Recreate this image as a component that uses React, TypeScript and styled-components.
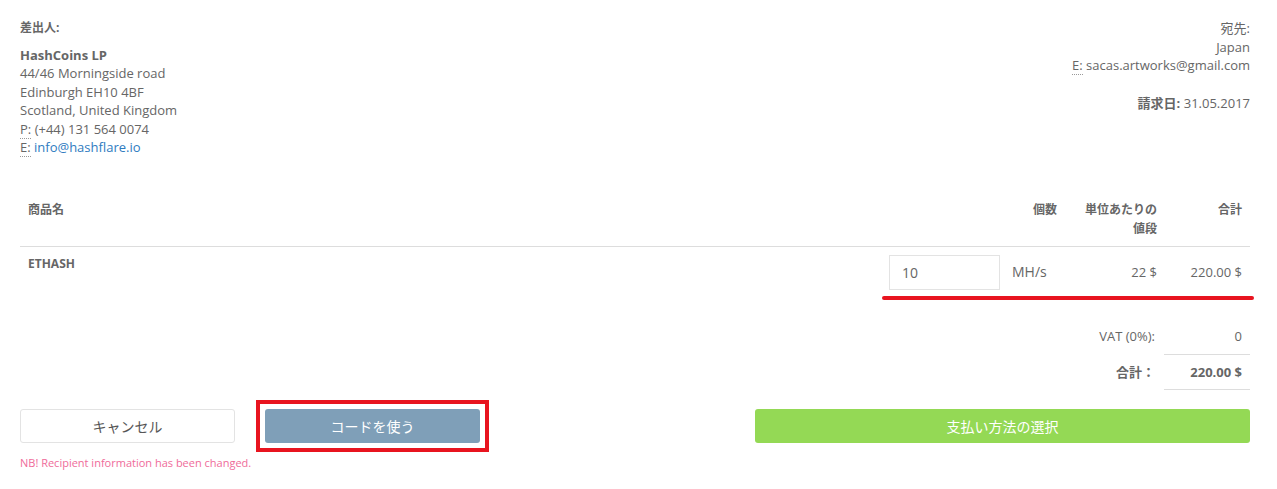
import React from "react";
import styled, { createGlobalStyle } from "styled-components";

const GlobalStyle = createGlobalStyle`
  body {
    margin: 0;
    background: #fff;
    font-family: "Open Sans", "Noto Sans CJK JP", sans-serif;
    font-size: 13px;
    line-height: 18.57px;
    color: #666;
  }
  * { box-sizing: border-box; }
`;

const Page = styled.div`
  padding: 19px 27px 0 20px;
`;

const Parties = styled.div`
  display: flex;
  justify-content: space-between;
  align-items: flex-start;
`;

const Block = styled.div<{ $right?: boolean }>`
  text-align: ${(p) => (p.$right ? "right" : "left")};
`;

const Label = styled.div`
  font-size: 12px;
  font-weight: 700;
  margin-bottom: 8px;
`;

const Line = styled.div<{ $bold?: boolean; $gap?: number }>`
  font-weight: ${(p) => (p.$bold ? 700 : 400)};
  margin-top: ${(p) => p.$gap ?? 0}px;
`;

const Abbr = styled.abbr`
  text-decoration: none;
  border-bottom: 1px dotted #999;
`;

const Link = styled.a`
  color: #2f7bbf;
  text-decoration: none;
`;

const Table = styled.div`
  margin-top: 36px;
`;

const Grid = styled.div`
  display: grid;
  grid-template-columns: 1fr 183px 100px 85px;
  position: relative;
`;

const Head = styled(Grid)`
  border-bottom: 1px solid #ddd;
`;

const Th = styled.div<{ $right?: boolean }>`
  padding: 8px;
  font-size: 12px;
  font-weight: 700;
  text-align: ${(p) => (p.$right ? "right" : "left")};
`;

const Td = styled.div`
  padding: 8px;
  display: flex;
  align-items: center;
  justify-content: flex-end;
`;

const NameCell = styled.div`
  padding: 8px;
  font-size: 12px;
  font-weight: 700;
`;

const QtyCell = styled.div`
  padding: 8px 8px 8px 7px;
  display: flex;
  align-items: center;
  gap: 12px;
`;

const QtyInput = styled.input`
  width: 111px;
  height: 35px;
  border: 1px solid #e3e3e3;
  padding: 0 12px;
  font-family: inherit;
  font-size: 14px;
  color: #666;
  outline: none;
`;

const Unit = styled.span`
  font-size: 14px;
`;

const Highlight = styled.span`
  position: absolute;
  right: -4px;
  bottom: -2px;
  width: 372px;
  height: 4px;
  border-radius: 2px;
  background: #e8141f;
`;

const Totals = styled.div`
  margin-top: 21px;
  display: grid;
  grid-template-columns: auto 86px;
  justify-content: end;
`;

const TotalLabel = styled.div<{ $bold?: boolean }>`
  padding: 8px 9px 8px 8px;
  text-align: right;
  font-weight: ${(p) => (p.$bold ? 700 : 400)};
`;

const TotalValue = styled.div<{ $bold?: boolean }>`
  padding: 8px;
  text-align: right;
  border-bottom: 1px solid #ddd;
  font-weight: ${(p) => (p.$bold ? 700 : 400)};
`;

const Actions = styled.div`
  margin-top: 19px;
  display: flex;
  justify-content: space-between;
`;

const LeftActions = styled.div`
  display: flex;
  gap: 30px;
`;

const Marked = styled.div`
  position: relative;
  display: flex;

  &::after {
    content: "";
    position: absolute;
    inset: -9px;
    border: 4px solid #e8141f;
    pointer-events: none;
  }
`;

const Button = styled.button<{ $variant: "plain" | "code" | "pay"; $wide?: boolean }>`
  width: ${(p) => (p.$wide ? 495 : 215)}px;
  height: 34px;
  border-radius: 3px;
  font-family: inherit;
  font-size: 14px;
  cursor: pointer;
  border: 1px solid
    ${(p) => (p.$variant === "plain" ? "#e3e3e3" : "transparent")};
  background: ${(p) =>
    p.$variant === "plain" ? "#fff" : p.$variant === "code" ? "#7f9fb8" : "#94d955"};
  color: ${(p) => (p.$variant === "plain" ? "#555" : "#fff")};
`;

const Notice = styled.div`
  margin-top: 11px;
  font-size: 11px;
  color: #ef6b9a;
`;

export default function App() {
  return (
    <>
      <GlobalStyle />
      <Page>
        <Parties>
          <Block>
            <Label>差出人:</Label>
            <Line $bold>HashCoins LP</Line>
            <Line>44/46 Morningside road</Line>
            <Line>Edinburgh EH10 4BF</Line>
            <Line>Scotland, United Kingdom</Line>
            <Line>
              <Abbr title="Phone">P:</Abbr> (+44) 131 564 0074
            </Line>
            <Line>
              <Abbr title="Email">E:</Abbr>{" "}
              <Link href="#">info@hashflare.io</Link>
            </Line>
          </Block>
          <Block $right>
            <Line>宛先:</Line>
            <Line>Japan</Line>
            <Line>
              <Abbr title="Email">E:</Abbr> sacas.artworks@gmail.com
            </Line>
            <Line $gap={19}>
              <b>請求日:</b> 31.05.2017
            </Line>
          </Block>
        </Parties>

        <Table>
          <Head>
            <Th>商品名</Th>
            <Th $right>個数</Th>
            <Th $right>
              単位あたりの
              <br />
              値段
            </Th>
            <Th $right>合計</Th>
          </Head>
          <Grid>
            <NameCell>ETHASH</NameCell>
            <QtyCell>
              <QtyInput defaultValue="10" />
              <Unit>MH/s</Unit>
            </QtyCell>
            <Td>22 $</Td>
            <Td>220.00 $</Td>
            <Highlight />
          </Grid>
        </Table>

        <Totals>
          <TotalLabel>VAT (0%):</TotalLabel>
          <TotalValue>0</TotalValue>
          <TotalLabel $bold>合計：</TotalLabel>
          <TotalValue $bold>220.00 $</TotalValue>
        </Totals>

        <Actions>
          <LeftActions>
            <Button $variant="plain">キャンセル</Button>
            <Marked>
              <Button $variant="code">コードを使う</Button>
            </Marked>
          </LeftActions>
          <Button $variant="pay" $wide>
            支払い方法の選択
          </Button>
        </Actions>
        <Notice>NB! Recipient information has been changed.</Notice>
      </Page>
    </>
  );
}
